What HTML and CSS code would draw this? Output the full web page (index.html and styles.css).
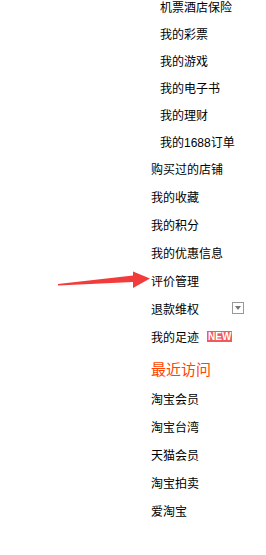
FILE: index.html
```html
<!DOCTYPE html>
<html lang="zh-CN">
<head>
    <meta charset="UTF-8">
    <meta name="viewport" content="width=device-width, initial-scale=1.0">
    <title>我的淘宝</title>
    <link rel="stylesheet" href="styles.css">
</head>
<body>
    <div class="menu">
        <ul class="sub-list">
            <li>机票酒店保险</li>
            <li>我的彩票</li>
            <li>我的游戏</li>
            <li>我的电子书</li>
            <li>我的理财</li>
            <li>我的<span class="num">1688</span>订单</li>
        </ul>
        <ul class="main-list">
            <li>购买过的店铺</li>
            <li>我的收藏</li>
            <li>我的积分</li>
            <li>我的优惠信息</li>
            <li>评价管理</li>
            <li class="with-toggle">退款维权 <span class="toggle"></span></li>
            <li>我的足迹 <span class="badge">NEW</span></li>
        </ul>
        <h3 class="recent-title">最近访问</h3>
        <ul class="main-list">
            <li>淘宝会员</li>
            <li>淘宝台湾</li>
            <li>天猫会员</li>
            <li>淘宝拍卖</li>
            <li>爱淘宝</li>
        </ul>
    </div>

    <!-- annotation arrow pointing at 评价管理 -->
    <svg class="arrow" width="266" height="555" viewBox="0 0 266 555">
        <polygon points="58,284 133,275.5 133,271.5 150,278.5 133,288 133,282 58,285.5" fill="#f23b3b"/>
    </svg>
</body>
</html>
```

FILE: styles.css
```css
body {
    margin: 0;
    padding: 0;
    background: #fff;
    color: #000;
    font-family: "Noto Sans CJK SC", "Liberation Sans", sans-serif;
    font-size: 12px;
    position: relative;
    height: 555px;
    overflow: hidden;
}

.menu {
    margin-left: 151px;
    width: 93px;
    margin-top: -7.5px;
}

ul {
    list-style: none;
    margin: 0;
    padding: 0;
}

.sub-list {
    padding-left: 9px;
}

.sub-list li {
    height: 27px;
    line-height: 27px;
    white-space: nowrap;
}

.sub-list .num {
    font-family: "Liberation Sans", sans-serif;
}

.main-list li {
    height: 28px;
    line-height: 28px;
    display: flex;
    align-items: center;
    white-space: nowrap;
}

.main-list .with-toggle {
    justify-content: space-between;
}

.toggle {
    width: 10px;
    height: 10px;
    border: 1px solid #999;
    position: relative;
    margin-top: -1px;
}

.toggle::after {
    content: "";
    position: absolute;
    left: 2px;
    top: 3px;
    border-left: 3px solid transparent;
    border-right: 3px solid transparent;
    border-top: 4px solid #777;
}

.badge {
    margin-left: 8px;
    background: #f05a5c;
    color: #fff;
    font-family: "Liberation Sans", sans-serif;
    font-weight: bold;
    font-size: 10px;
    line-height: 11px;
    height: 11px;
    padding: 0 1px;
}

.recent-title {
    margin: 4px 0 2.5px;
    font-size: 15px;
    font-weight: normal;
    line-height: 28px;
    color: #ff4400;
}

.arrow {
    position: absolute;
    left: 0;
    top: 0;
}
```
